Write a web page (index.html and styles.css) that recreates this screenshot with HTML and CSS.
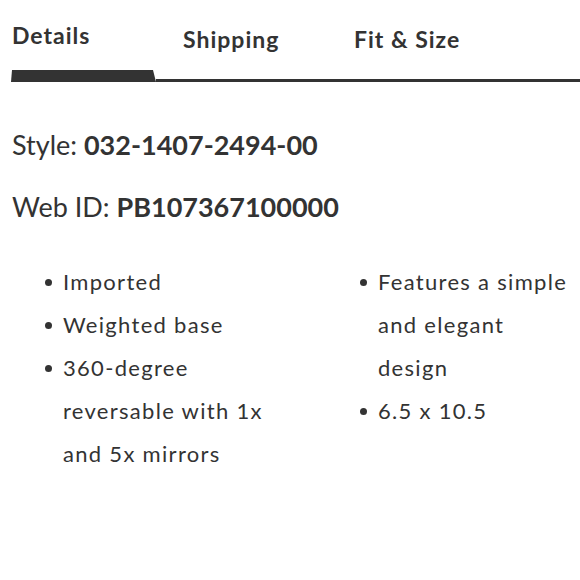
FILE: index.html
```html
<!DOCTYPE html>
<html>
<head>
<meta charset="utf-8">
<link rel="stylesheet" href="styles.css">
</head>
<body>
<div class="page">
  <nav class="tabs">
    <div class="tab active">Details</div>
    <div class="tab">Shipping</div>
    <div class="tab">Fit &amp; Size</div>
  </nav>
  <div class="track">
    <div class="track-bar"></div>
    <div class="track-line"></div>
  </div>
  <div class="meta">
    <p class="meta-row">Style: <b>032-1407-2494-00</b></p>
    <p class="meta-row">Web ID: <b>PB107367100000</b></p>
  </div>
  <div class="lists">
    <ul class="list list-left">
      <li><span class="item">Imported</span></li>
      <li><span class="item">Weighted base</span></li>
      <li><span class="item">360-degree reversable with 1x and 5x mirrors</span></li>
    </ul>
    <ul class="list list-right">
      <li><span class="item">Features a simple and elegant design</span></li>
      <li><span class="item">6.5 x 10.5</span></li>
    </ul>
  </div>
</div>
</body>
</html>
```

FILE: styles.css
```css
* { box-sizing: border-box; }
html, body { margin: 0; padding: 0; background: #fff; }
body {
  font-family: "Lato", "Open Sans", sans-serif;
  color: #333;
  width: 580px;
  height: 580px;
  overflow: hidden;
}
.page { padding-top: 18px; }
.tabs {
  display: flex;
  padding-left: 12px;
  height: 52px;
  align-items: flex-start;
}
.tab {
  width: 171px;
  font-size: 23px;
  font-weight: 700;
  letter-spacing: 1px;
  line-height: 30px;
  padding-top: 6px;
  color: #333;
}
.tab.active { padding-top: 2px; }
.track {
  display: flex;
  align-items: flex-end;
  padding-left: 11px;
}
.track-bar {
  width: 145px;
  height: 12px;
  background: #333;
  clip-path: polygon(1px 0, 142px 0, 145px 100%, 0 100%);
}
.track-line {
  flex: 1;
  height: 3px;
  background: #333;
}
.meta { padding: 46px 0 0 12px; }
.meta-row {
  margin: 0 0 28px;
  font-size: 27px;
  line-height: 34px;
  color: #333;
}
.meta-row b { font-weight: 700; }
.lists {
  display: grid;
  grid-template-columns: 315px 1fr;
  padding-left: 45px;
  padding-top: 8px;
}
.list {
  list-style: none;
  margin: 0;
  padding: 0;
}
.list li {
  display: flex;
  font-size: 22px;
  letter-spacing: 1.3px;
  line-height: 43px;
}
.list li::before {
  content: "";
  flex: none;
  width: 7px;
  height: 7px;
  border-radius: 50%;
  background: #333;
  margin: 19px 11px 0 0;
}
.list-left .item { width: 220px; }
.list-right .item { width: 197px; }
```
